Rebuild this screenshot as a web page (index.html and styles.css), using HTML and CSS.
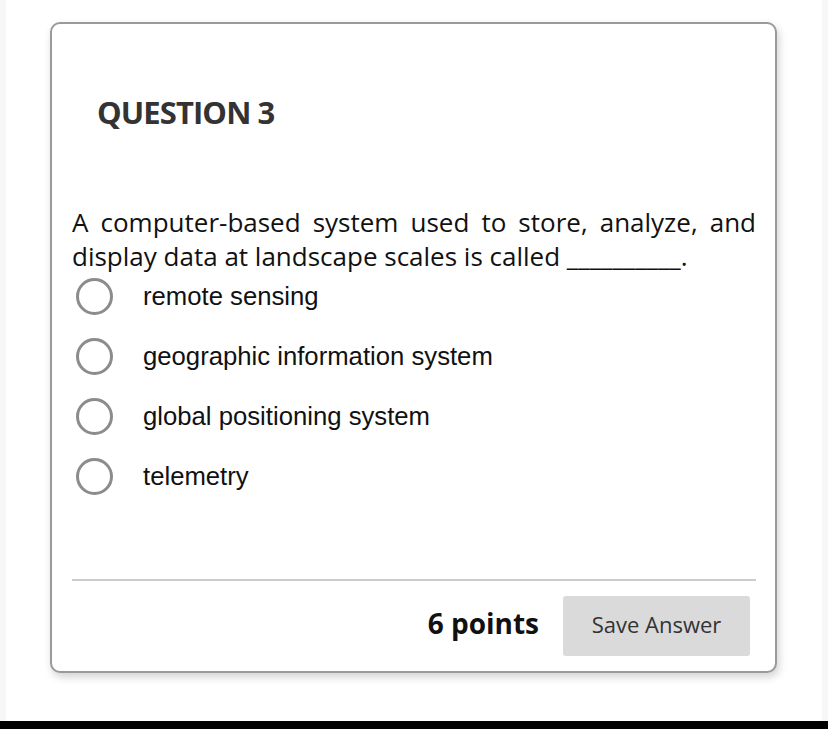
FILE: index.html
```html
<!DOCTYPE html>
<html lang="en">
<head>
<meta charset="utf-8">
<title>Question 3</title>
<link rel="stylesheet" href="styles.css">
</head>
<body>
<div class="page">
  <div class="card">
    <h2 class="q-title">QUESTION 3</h2>
    <p class="q-text">A computer-based system used to store, analyze, and display data at landscape scales is called __________.</p>
    <ul class="options">
      <li class="option"><span class="radio"></span><span class="opt-label">remote sensing</span></li>
      <li class="option"><span class="radio"></span><span class="opt-label">geographic information system</span></li>
      <li class="option"><span class="radio"></span><span class="opt-label">global positioning system</span></li>
      <li class="option"><span class="radio"></span><span class="opt-label">telemetry</span></li>
    </ul>
    <div class="footer">
      <span class="points">6 points</span>
      <button class="save-btn">Save Answer</button>
    </div>
  </div>
</div>
<div class="bottom-bar"></div>
</body>
</html>
```
FILE: styles.css
```css
html, body {
  margin: 0;
  padding: 0;
}
body {
  background: #f7f7f7;
  width: 828px;
  height: 729px;
  overflow: hidden;
}
.page {
  margin: 0 6px;
  height: 721px;
  background: #ffffff;
  padding-top: 22px;
  box-sizing: border-box;
}
.card {
  margin-left: 44px;
  width: 727px;
  height: 651px;
  box-sizing: border-box;
  border: 2px solid #9a9a9a;
  border-radius: 10px;
  background: #fff;
  padding: 0 19px 0 20px;
  box-shadow: 2px 4px 8px rgba(0, 0, 0, 0.18);
  display: flex;
  flex-direction: column;
}
.q-title {
  margin: 68px 0 0 25px;
  font-family: "Open Sans", sans-serif;
  font-weight: 700;
  font-size: 31px;
  line-height: 40px;
  color: #333333;
  letter-spacing: -0.9px;
}
.q-text {
  margin: 73px 0 0 0;
  font-family: "Open Sans", sans-serif;
  font-size: 26px;
  line-height: 34px;
  color: #111;
  text-align: justify;
}
.options {
  list-style: none;
  margin: -7px 0 0 0;
  padding: 0;
}
.option {
  height: 60px;
  display: flex;
  align-items: center;
  padding-left: 4px;
}
.radio {
  width: 37px;
  height: 37px;
  box-sizing: border-box;
  border: 3px solid #8c8c8c;
  border-radius: 50%;
  flex: none;
}
.opt-label {
  margin-left: 30px;
  font-family: "Liberation Sans", Arial, sans-serif;
  font-size: 25.7px;
  color: #111;
}
.footer {
  margin-top: auto;
  border-top: 2px solid #cccccc;
  padding: 15px 6px 15px 0;
  display: flex;
  justify-content: flex-end;
  align-items: center;
  gap: 24px;
}
.points {
  font-family: "Open Sans", sans-serif;
  font-weight: 700;
  font-size: 28px;
  color: #111;
  margin-bottom: 6px;
}
.save-btn {
  width: 187px;
  height: 60px;
  border: none;
  border-radius: 3px;
  background: #dadada;
  font-family: "Open Sans", sans-serif;
  font-size: 22px;
  color: #333;
  padding: 0 0 5px 0;
}
.bottom-bar {
  height: 8px;
  background: #000;
}
```
